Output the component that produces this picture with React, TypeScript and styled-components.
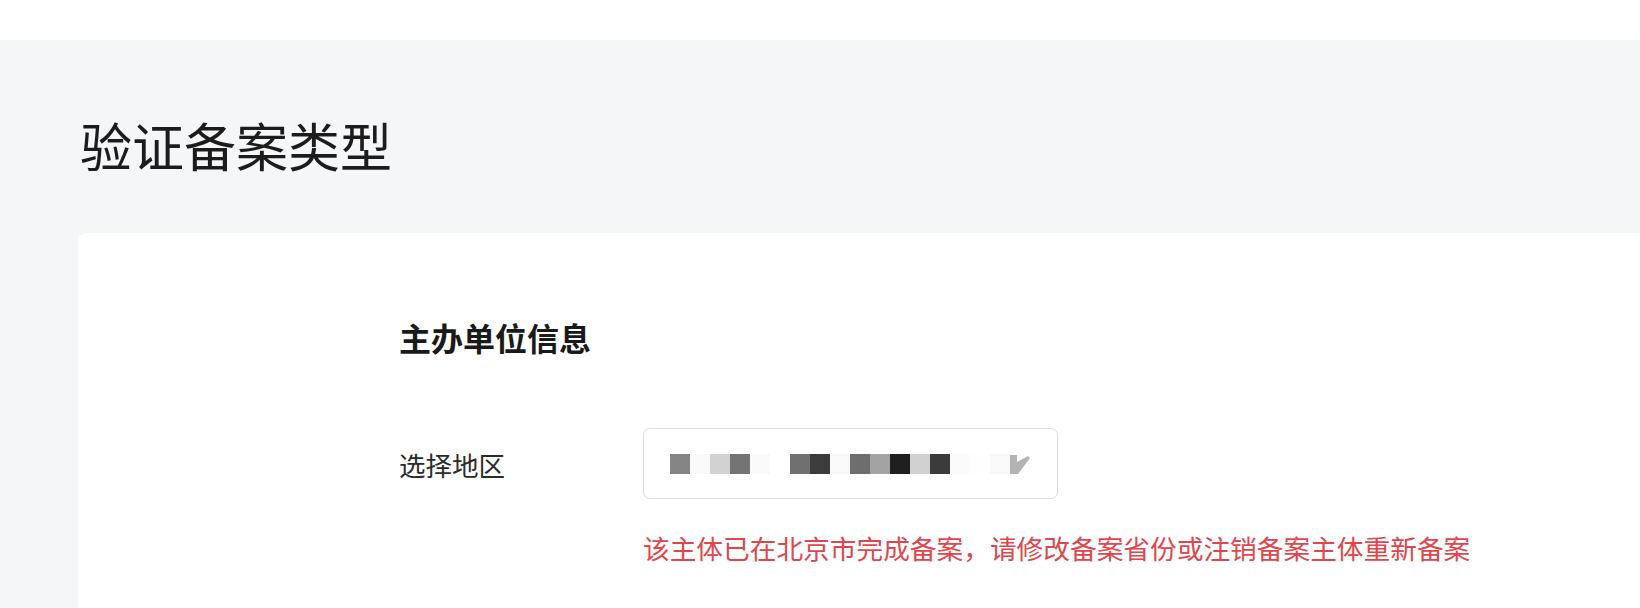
import * as React from "react";
import styled, { createGlobalStyle } from "styled-components";

const GlobalStyle = createGlobalStyle`
  html, body {
    margin: 0;
    padding: 0;
    background: #ffffff;
    font-family: "Noto Sans CJK SC", "Noto Sans", sans-serif;
    overflow: hidden;
  }
`;

const TopBar = styled.div`
  height: 40px;
  background: #ffffff;
`;

const Section = styled.section`
  background: #f5f6f8;
  padding: 69px 0 0 78px;
  min-height: 568px;
  box-sizing: border-box;
  overflow: hidden;
`;

const PageTitle = styled.h1`
  margin: 0 0 52px 2px;
  font-size: 52px;
  line-height: 72px;
  font-weight: 400;
  color: #1c1c1c;
`;

const Card = styled.div`
  background: #ffffff;
  border-radius: 8px 0 0 0;
  min-height: 400px;
  padding: 82px 0 0 321px;
`;

const GroupTitle = styled.h2`
  margin: 0 0 69px;
  font-size: 32px;
  line-height: 44px;
  font-weight: 700;
  color: #1a1a1a;
`;

const FieldRow = styled.div`
  display: flex;
  align-items: center;
`;

const Label = styled.label`
  width: 244px;
  flex-shrink: 0;
  font-size: 26.5px;
  line-height: 36px;
  color: #2b2b2b;
  padding-top: 3px;
`;

const SelectBox = styled.div`
  width: 415px;
  height: 71px;
  box-sizing: border-box;
  border: 1.5px solid #dedede;
  border-radius: 7px;
  display: flex;
  align-items: center;
  padding-left: 26px;
`;

const Mosaic = styled.div`
  display: flex;
  align-items: center;
`;

const Block = styled.span<{ $c: string }>`
  display: block;
  width: 20px;
  height: 20px;
  background: ${(p) => p.$c};
`;

const ErrorText = styled.p`
  margin: 31px 0 0 244px;
  font-size: 26.7px;
  line-height: 36px;
  color: #e0464c;
`;

const mosaic = [
  "#858585",
  "#fafafa",
  "#d2d2d2",
  "#747474",
  "#fafafa",
  "#ffffff",
  "#707070",
  "#3c3c3c",
  "#f9f9f9",
  "#6e6e6e",
  "#a3a3a3",
  "#1f1f1f",
  "#d1d1d1",
  "#3b3b3b",
  "#fbfbfb",
  "#fefefe",
  "#f9f9f9",
];

// blurred remains of the dropdown arrow
const ArrowBlur = () => (
  <svg width="20" height="20" viewBox="0 0 20 20">
    <polygon points="0,1 7,1 7,8 18,2 20,4 8,20 0,20" fill="#b4b4b4" />
  </svg>
);

export default function App() {
  return (
    <>
      <GlobalStyle />
      <TopBar />
      <Section>
        <PageTitle>验证备案类型</PageTitle>
        <Card>
          <GroupTitle>主办单位信息</GroupTitle>
          <FieldRow>
            <Label>选择地区</Label>
            <SelectBox>
              <Mosaic>
                {mosaic.map((c, i) => (
                  <Block key={i} $c={c} />
                ))}
                <ArrowBlur />
              </Mosaic>
            </SelectBox>
          </FieldRow>
          <ErrorText>该主体已在北京市完成备案，请修改备案省份或注销备案主体重新备案</ErrorText>
        </Card>
      </Section>
    </>
  );
}
